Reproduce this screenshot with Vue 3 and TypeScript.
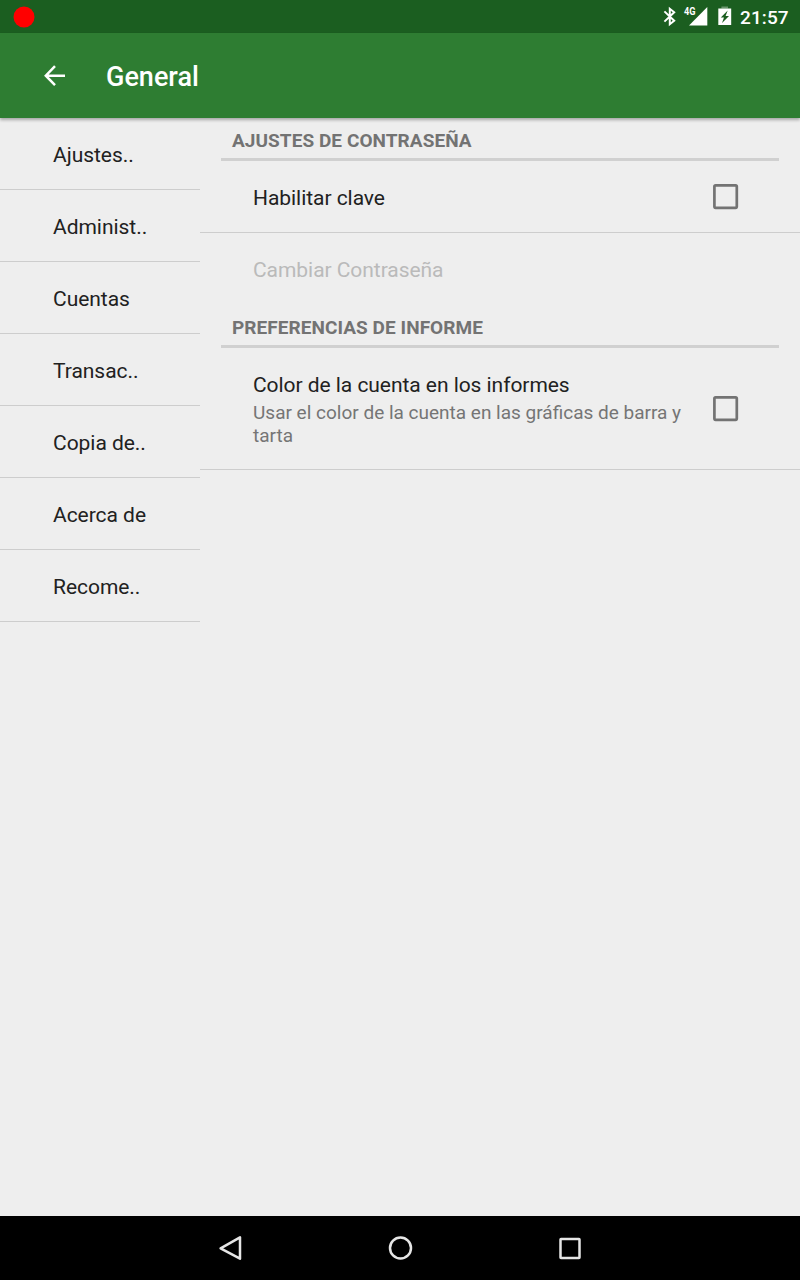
<script setup lang="ts">
import { ref } from 'vue'

interface Preference {
  title: string
  summary?: string
  disabled?: boolean
  checkable?: boolean
}

interface Category {
  title: string
  items: Preference[]
}

const headers = ref<string[]>([
  'Ajustes..',
  'Administ..',
  'Cuentas',
  'Transac..',
  'Copia de..',
  'Acerca de',
  'Recome..',
])

const categories = ref<Category[]>([
  {
    title: 'AJUSTES DE CONTRASEÑA',
    items: [
      { title: 'Habilitar clave', checkable: true },
      { title: 'Cambiar Contraseña', disabled: true },
    ],
  },
  {
    title: 'PREFERENCIAS DE INFORME',
    items: [
      {
        title: 'Color de la cuenta en los informes',
        summary: 'Usar el color de la cuenta en las gráficas de barra y tarta',
        checkable: true,
      },
    ],
  },
])
</script>

<template>
  <div class="screen">
    <div class="status">
      <svg class="record" width="22" height="22" viewBox="0 0 22 22"><circle cx="11" cy="11" r="10.5" fill="#f00" /></svg>
      <div class="tray">
        <svg class="bt" width="14" height="20" viewBox="0 0 14 20">
          <path d="M1.4 4.4 11.2 13.8 6.8 17.3V1.7L11.2 5.2 1.4 14.6" fill="none" stroke="#fff" stroke-width="2" />
        </svg>
        <svg class="signal" width="24" height="20" viewBox="0 0 24 20">
          <text x="0" y="8.3" textLength="11.5" lengthAdjust="spacingAndGlyphs">4G</text>
          <path d="M5 18.4 23.3 0V18.4Z" fill="#fff" />
        </svg>
        <svg class="battery" width="14" height="20" viewBox="0 0 14 20">
          <path d="M3.4 -.5H10v2H3.4z" fill="#fff" fill-opacity=".35" />
          <path d="M.3 1.5H13.2V18H.3z" fill="#fff" />
          <path d="M9.7 3.6 2.8 10.5H6L4 16 11 8.9H7.6z" fill="#1b5e20" />
        </svg>
        <span class="clock">21:57</span>
      </div>
    </div>

    <header class="toolbar">
      <svg class="back" width="22" height="22" viewBox="0 0 22 22">
        <path d="M21 10.7H2M11 1.2 1.8 10.7 11 20.2" fill="none" stroke="#fff" stroke-width="2.5" />
      </svg>
      <h1>General</h1>
    </header>

    <main class="body">
      <nav class="side">
        <div v-for="h in headers" :key="h" class="side-row">{{ h }}</div>
      </nav>
      <div class="prefs">
        <section v-for="c in categories" :key="c.title">
          <h2>{{ c.title }}</h2>
          <div
            v-for="p in c.items"
            :key="p.title"
            class="pref"
            :class="{ disabled: p.disabled, tall: p.summary }"
          >
            <div class="texts">
              <div class="title">{{ p.title }}</div>
              <div v-if="p.summary" class="summary">{{ p.summary }}</div>
            </div>
            <svg v-if="p.checkable" width="26" height="26" viewBox="0 0 26 26">
              <rect x="1.4" y="1.4" width="22.4" height="22.4" rx="1.2" fill="none" stroke="#737373" stroke-width="2.7" />
            </svg>
          </div>
        </section>
      </div>
    </main>

    <footer class="nav">
      <svg width="26" height="26" viewBox="0 0 26 26"><path d="M23 2.3V23.7L3.6 13.4Z" /></svg>
      <svg width="26" height="26" viewBox="0 0 26 26"><circle cx="13.5" cy="13" r="10.5" /></svg>
      <svg width="26" height="26" viewBox="0 0 26 26"><rect x="3.5" y="3.9" width="19" height="19" rx=".5" /></svg>
    </footer>
  </div>
</template>

<style>
body {
  margin: 0;
  background: #eee;
}
</style>

<style scoped>
.screen {
  width: 800px;
  height: 1280px;
  display: flex;
  flex-direction: column;
  overflow: hidden;
  background: #eee;
  color: #212121;
  font-family: Roboto, 'Noto Sans', sans-serif;
}
svg {
  display: block;
  flex: none;
  overflow: visible;
}
.status {
  height: 33px;
  flex: none;
  box-sizing: border-box;
  padding: 0 11px 0 13px;
  background: #1b5e20;
  display: flex;
  align-items: center;
  justify-content: space-between;
}
.tray {
  display: flex;
  align-items: center;
}
.bt {
  margin-right: 7px;
}
.signal {
  margin-right: 10px;
}
.signal text {
  fill: #fff;
  font-size: 10.5px;
  font-weight: 700;
}
.battery {
  margin-right: 8px;
}
.clock {
  width: 49px;
  color: #fff;
  font-size: 19px;
  font-weight: 500;
  line-height: 22px;
  padding-top: 2px;
  letter-spacing: 0.1px;
}
.toolbar {
  height: 85px;
  flex: none;
  box-sizing: border-box;
  padding-left: 44px;
  display: flex;
  align-items: center;
  background: #2e7d32;
  box-shadow: 0 2px 3px rgba(0, 0, 0, 0.3);
  z-index: 1;
}
.back {
  margin-right: 40px;
}
h1 {
  margin: 0;
  padding-top: 2px;
  color: #fff;
  font-size: 27px;
  font-weight: 500;
  line-height: 32px;
}
.body {
  flex: 1;
  display: flex;
  align-items: flex-start;
}
.side {
  width: 200px;
  flex: none;
}
.side-row {
  height: 71px;
  padding-left: 53px;
  border-bottom: 1px solid #cdcdcd;
  font-size: 21px;
  line-height: 74px;
  letter-spacing: -0.04px;
}
.prefs {
  flex: 1;
}
h2 {
  height: 40px;
  margin: 0 21px;
  padding-left: 11px;
  border-bottom: 3px solid #d0d0d0;
  color: #737373;
  font-size: 19px;
  font-weight: 700;
  line-height: 46px;
  letter-spacing: 0.06px;
}
.pref {
  height: 71px;
  padding: 0 61px 0 53px;
  border-bottom: 1px solid #cdcdcd;
  display: flex;
  align-items: center;
  justify-content: space-between;
}
.pref.disabled {
  border-color: transparent;
}
.pref.disabled .title {
  color: #bababa;
}
.pref.tall {
  height: 121px;
}
.texts {
  width: 440px;
  padding-top: 4px;
}
.tall .texts {
  padding-top: 2px;
}
.title {
  font-size: 21px;
  line-height: 25px;
  letter-spacing: -0.05px;
}
.summary {
  padding-top: 3px;
  color: #757575;
  font-size: 19px;
  line-height: 23px;
}
.nav {
  height: 64px;
  flex: none;
  background: #000;
  display: flex;
  align-items: center;
  justify-content: center;
  gap: 144px;
}
.nav svg {
  fill: none;
  stroke: #e6e6e6;
  stroke-width: 2.5;
  stroke-linejoin: round;
}
</style>
